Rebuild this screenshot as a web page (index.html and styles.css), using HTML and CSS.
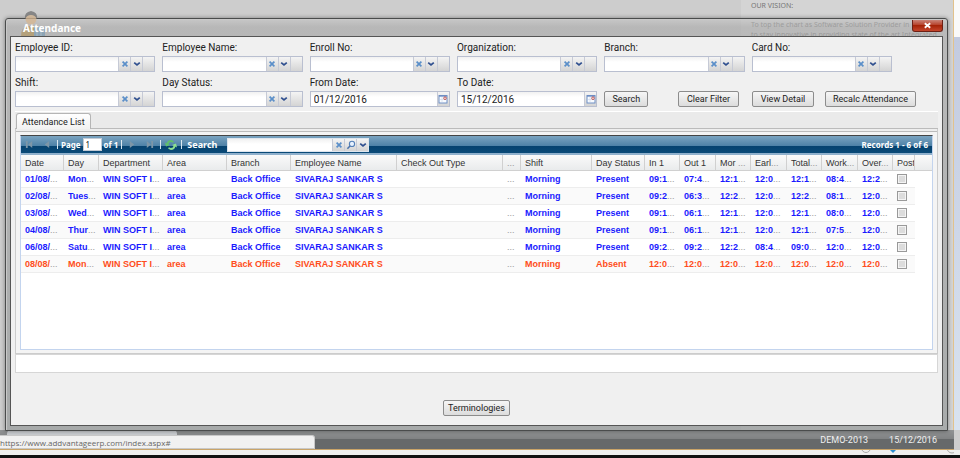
FILE: index.html
```html
<!DOCTYPE html>
<html lang="en">
<head>
    <meta charset="UTF-8">
    <meta name="viewport" content="width=device-width, initial-scale=1.0">
    <title>Attendance</title>
    <link rel="stylesheet" href="styles.css">
</head>
<body>
    <svg class="sprite" aria-hidden="true">
        <symbol id="i-clear" viewBox="0 0 10 10"><path d="M2.6 2.6l4.8 4.8M7.4 2.6L2.6 7.4" stroke="#5b8fc9" stroke-width="1.7" fill="none"/></symbol>
        <symbol id="i-down" viewBox="0 0 10 10"><path d="M2.2 3.6L5 6l2.8-2.4" stroke="#2f4f8f" stroke-width="1.7" fill="none"/></symbol>
        <symbol id="i-find" viewBox="0 0 10 10"><circle cx="6" cy="3.9" r="2.6" stroke="#5580b8" stroke-width="1.1" fill="#e8f2ff"/><path d="M4 6L1.4 8.8" stroke="#4a72ab" stroke-width="1.5"/></symbol>
        <symbol id="i-date" viewBox="0 0 10 10"><rect x="1" y="1.5" width="8" height="7.5" fill="#f8fbff" stroke="#6f8fc4"/><path d="M1 2h8" stroke="#6f8fc4" stroke-width="1.4"/><path d="M2 5.5h6M4 3v5.5" stroke="#c9d6ea" stroke-width=".6"/><circle cx="7" cy="4.2" r="1.3" fill="#fff" stroke="#b8433f" stroke-width=".9"/></symbol>
    </svg>

    <div class="desktop">
        <div class="portal">
            <p>OUR VISION:</p>
            <p>To top the chart as Software Solution Provider in<br>to stay innovative in providing state of the art Integrated</p>
        </div>
        <aside class="edge"></aside>
    </div>

    <div class="statusbar">
        <div class="open-tab"></div>
        <span>DEMO-2013</span>
        <span>15/12/2016</span>
    </div>
    <div class="strip">
        <svg width="100" height="6" viewBox="0 0 100 6">
            <circle cx="12" cy="-2" r="4.5" fill="none" stroke="#aaa"/>
            <path d="M36 0h6l-3 3z" fill="#2d8fd0"/>
            <circle cx="98" cy="-2" r="5" fill="none" stroke="#aaa"/>
        </svg>
    </div>
    <div class="taskbar"></div>

    <section class="window">
        <header class="titlebar">
            <svg class="person" viewBox="0 0 27 26">
                <path d="M1 26q0-9 7-10h6q6 1 6 10z" fill="#b39a68"/>
                <path d="M14 17h11v9H14z" fill="#7f9fb6"/>
                <path d="M17 17v9M21 17v9" stroke="#a9bdca"/>
                <circle cx="11" cy="9" r="5.5" fill="#d6b690"/>
                <path d="M5 9Q4 2 11 1q7 1 6 8-2-4-6-4T5 9z" fill="#6f6f6f"/>
            </svg>
            <h1>Attendance</h1>
            <button class="close" aria-label="Close">
                <svg viewBox="0 0 10 10"><path d="M2 2.5l6 5M8 2.5l-6 5" stroke="#fff" stroke-width="2"/></svg>
            </button>
        </header>

        <div class="content">
            <form class="filters">
                <div class="field">
                    <label for="empId">Employee ID:</label>
                    <div class="combo"><input type="text" id="empId"><button type="button" aria-label="Clear"><svg><use href="#i-clear"/></svg></button><button type="button" aria-label="Open"><svg><use href="#i-down"/></svg></button><button type="button" aria-label="More"></button></div>
                </div>
                <div class="field">
                    <label for="empName">Employee Name:</label>
                    <div class="combo"><input type="text" id="empName"><button type="button" aria-label="Clear"><svg><use href="#i-clear"/></svg></button><button type="button" aria-label="Open"><svg><use href="#i-down"/></svg></button><button type="button" aria-label="More"></button></div>
                </div>
                <div class="field">
                    <label for="enroll">Enroll No:</label>
                    <div class="combo"><input type="text" id="enroll"><button type="button" aria-label="Clear"><svg><use href="#i-clear"/></svg></button><button type="button" aria-label="Open"><svg><use href="#i-down"/></svg></button><button type="button" aria-label="More"></button></div>
                </div>
                <div class="field">
                    <label for="org">Organization:</label>
                    <div class="combo"><input type="text" id="org"><button type="button" aria-label="Clear"><svg><use href="#i-clear"/></svg></button><button type="button" aria-label="Open"><svg><use href="#i-down"/></svg></button><button type="button" aria-label="More"></button></div>
                </div>
                <div class="field">
                    <label for="branch">Branch:</label>
                    <div class="combo"><input type="text" id="branch"><button type="button" aria-label="Clear"><svg><use href="#i-clear"/></svg></button><button type="button" aria-label="Open"><svg><use href="#i-down"/></svg></button><button type="button" aria-label="More"></button></div>
                </div>
                <div class="field">
                    <label for="card">Card No:</label>
                    <div class="combo"><input type="text" id="card"><button type="button" aria-label="Clear"><svg><use href="#i-clear"/></svg></button><button type="button" aria-label="Open"><svg><use href="#i-down"/></svg></button><button type="button" aria-label="More"></button></div>
                </div>
                <div class="field">
                    <label for="shift">Shift:</label>
                    <div class="combo"><input type="text" id="shift"><button type="button" aria-label="Clear"><svg><use href="#i-clear"/></svg></button><button type="button" aria-label="Open"><svg><use href="#i-down"/></svg></button><button type="button" aria-label="More"></button></div>
                </div>
                <div class="field">
                    <label for="dayStatus">Day Status:</label>
                    <div class="combo"><input type="text" id="dayStatus"><button type="button" aria-label="Clear"><svg><use href="#i-clear"/></svg></button><button type="button" aria-label="Open"><svg><use href="#i-down"/></svg></button><button type="button" aria-label="More"></button></div>
                </div>
                <div class="field">
                    <label for="fromDate">From Date:</label>
                    <div class="combo"><input type="text" id="fromDate" value="01/12/2016"><button type="button" aria-label="Pick date"><svg><use href="#i-date"/></svg></button></div>
                </div>
                <div class="field">
                    <label for="toDate">To Date:</label>
                    <div class="combo"><input type="text" id="toDate" value="15/12/2016"><button type="button" aria-label="Pick date"><svg><use href="#i-date"/></svg></button></div>
                </div>
                <div class="actions">
                    <button type="button" class="btn search-btn">Search</button>
                    <button type="button" class="btn clear-btn">Clear Filter</button>
                    <button type="button" class="btn view-btn">View Detail</button>
                    <button type="button" class="btn recalc-btn">Recalc Attendance</button>
                </div>
            </form>

            <div class="tabs">
                <button type="button" class="tab">Attendance List</button>
            </div>

            <div class="tab-body">
                <div class="grid">
                    <div class="toolbar">
                        <button type="button" class="nav" aria-label="First page"><svg viewBox="0 0 10 10"><path d="M1 1h2v8H1zM8 1v8L3.5 5z"/></svg></button>
                        <button type="button" class="nav" aria-label="Previous page"><svg viewBox="0 0 10 10"><path d="M8 1v8L3 5z"/></svg></button>
                        <span class="sep"></span>
                        <label for="page">Page</label>
                        <input type="text" id="page" class="page" value="1">
                        <span>of 1</span>
                        <span class="sep"></span>
                        <button type="button" class="nav" aria-label="Next page"><svg viewBox="0 0 10 10"><path d="M2 1v8l5-4z"/></svg></button>
                        <button type="button" class="nav" aria-label="Last page"><svg viewBox="0 0 10 10"><path d="M2 1v8l4.5-4zM7 1h2v8H7z"/></svg></button>
                        <span class="sep"></span>
                        <button type="button" class="reload" aria-label="Refresh"><svg viewBox="0 0 12 12"><path d="M2.5 5Q3 2 6 2l2.5 1" fill="none" stroke="#5fbf6c" stroke-width="1.8"/><path d="M0 3.5l5 2.5-4 1.5z" fill="#5fbf6c"/><path d="M9.5 7Q9 10 6 10L3.5 9" fill="none" stroke="#8fe08f" stroke-width="1.8"/><path d="M12 8.5L7 6l4-1.5z" fill="#8fe08f"/></svg></button>
                        <span class="sep"></span>
                        <label for="gridSearch" class="search-label">Search</label>
                        <div class="combo grid-search"><input type="text" id="gridSearch"><button type="button" aria-label="Clear"><svg><use href="#i-clear"/></svg></button><button type="button" aria-label="Find"><svg><use href="#i-find"/></svg></button><button type="button" aria-label="Open"><svg><use href="#i-down"/></svg></button></div>
                        <span class="records">Records 1 - 6 of 6</span>
                    </div>
                    <table>
                        <colgroup>
                            <col class="c-date"><col class="c-time"><col class="c-mid"><col class="c-mid"><col class="c-mid"><col class="c-wide"><col class="c-wide"><col class="c-dots"><col class="c-shift"><col class="c-status"><col class="c-time"><col class="c-calc"><col class="c-time"><col class="c-calc"><col class="c-time"><col class="c-calc"><col class="c-time"><col class="c-post"><col>
                        </colgroup>
                        <thead>
                            <tr><th>Date</th><th>Day</th><th>Department</th><th>Area</th><th>Branch</th><th>Employee Name</th><th>Check Out Type</th><th><i>...</i></th><th>Shift</th><th>Day Status</th><th>In 1</th><th>Out 1</th><th>Mor <i>...</i></th><th>Earl<i>...</i></th><th>Total<i>...</i></th><th>Work<i>...</i></th><th>Over<i>...</i></th><th>Post</th><th></th></tr>
                        </thead>
                        <tbody>
                            <tr><td>01/08/<i>...</i></td><td>Mon<i>...</i></td><td>WIN SOFT I<i>...</i></td><td>area</td><td>Back Office</td><td>SIVARAJ SANKAR S</td><td></td><td><i>...</i></td><td>Morning</td><td>Present</td><td>09:1<i>...</i></td><td>07:4<i>...</i></td><td>12:1<i>...</i></td><td>12:0<i>...</i></td><td>12:1<i>...</i></td><td>08:4<i>...</i></td><td>12:2<i>...</i></td><td><input type="checkbox" aria-label="Post 01/08"></td></tr>
                            <tr><td>02/08/<i>...</i></td><td>Tues<i>...</i></td><td>WIN SOFT I<i>...</i></td><td>area</td><td>Back Office</td><td>SIVARAJ SANKAR S</td><td></td><td><i>...</i></td><td>Morning</td><td>Present</td><td>09:2<i>...</i></td><td>06:3<i>...</i></td><td>12:2<i>...</i></td><td>12:0<i>...</i></td><td>12:2<i>...</i></td><td>08:1<i>...</i></td><td>12:0<i>...</i></td><td><input type="checkbox" aria-label="Post 02/08"></td></tr>
                            <tr><td>03/08/<i>...</i></td><td>Wed<i>...</i></td><td>WIN SOFT I<i>...</i></td><td>area</td><td>Back Office</td><td>SIVARAJ SANKAR S</td><td></td><td><i>...</i></td><td>Morning</td><td>Present</td><td>09:1<i>...</i></td><td>06:1<i>...</i></td><td>12:1<i>...</i></td><td>12:0<i>...</i></td><td>12:1<i>...</i></td><td>08:0<i>...</i></td><td>12:0<i>...</i></td><td><input type="checkbox" aria-label="Post 03/08"></td></tr>
                            <tr><td>04/08/<i>...</i></td><td>Thur<i>...</i></td><td>WIN SOFT I<i>...</i></td><td>area</td><td>Back Office</td><td>SIVARAJ SANKAR S</td><td></td><td><i>...</i></td><td>Morning</td><td>Present</td><td>09:1<i>...</i></td><td>06:1<i>...</i></td><td>12:1<i>...</i></td><td>12:0<i>...</i></td><td>12:1<i>...</i></td><td>07:5<i>...</i></td><td>12:0<i>...</i></td><td><input type="checkbox" aria-label="Post 04/08"></td></tr>
                            <tr><td>06/08/<i>...</i></td><td>Satu<i>...</i></td><td>WIN SOFT I<i>...</i></td><td>area</td><td>Back Office</td><td>SIVARAJ SANKAR S</td><td></td><td><i>...</i></td><td>Morning</td><td>Present</td><td>09:2<i>...</i></td><td>09:2<i>...</i></td><td>12:2<i>...</i></td><td>08:4<i>...</i></td><td>09:0<i>...</i></td><td>12:0<i>...</i></td><td>12:0<i>...</i></td><td><input type="checkbox" aria-label="Post 06/08"></td></tr>
                            <tr class="absent"><td>08/08/<i>...</i></td><td>Mon<i>...</i></td><td>WIN SOFT I<i>...</i></td><td>area</td><td>Back Office</td><td>SIVARAJ SANKAR S</td><td></td><td><i>...</i></td><td>Morning</td><td>Absent</td><td>12:0<i>...</i></td><td>12:0<i>...</i></td><td>12:0<i>...</i></td><td>12:0<i>...</i></td><td>12:0<i>...</i></td><td>12:0<i>...</i></td><td>12:0<i>...</i></td><td><input type="checkbox" aria-label="Post 08/08"></td></tr>
                        </tbody>
                    </table>
                </div>
            </div>
            <div class="summary"></div>
            <div class="bottom">
                <button type="button" class="btn">Terminologies</button>
            </div>
        </div>
    </section>

    <div class="link-hint">https://www.addvantageerp.com/index.aspx#</div>
</body>
</html>
```
FILE: styles.css
```css
* {
    box-sizing: border-box;
}
body {
    margin: 0;
    height: 100vh;
    display: flex;
    flex-direction: column;
    position: relative;
    overflow: hidden;
    background: #cdcdcd;
    font-family: Roboto, Tahoma, sans-serif;
    font-size: 10px;
    color: #222;
}
button, input {
    font: inherit;
    color: inherit;
    margin: 0;
    padding: 0;
}
.sprite {
    position: absolute;
    width: 0;
    height: 0;
}

/* page behind the window */
.desktop {
    flex: 1;
    display: flex;
    justify-content: flex-end;
    min-height: 0;
}
.portal {
    width: 212px;
    padding-left: 10px;
    background: #d4d4d4;
    color: #777;
    font-family: "Noto Sans", sans-serif;
    font-size: 7px;
    line-height: 10px;
    white-space: nowrap;
}
.portal p {
    margin: 1px 0 9px;
}
.edge {
    width: 7px;
    border-left: 1px solid #e2c28c;
    background: linear-gradient(#fafafa 37px, #c3cbe0 37px, #d9e3f0);
}
.statusbar {
    height: 20px;
    margin-right: 6px;
    padding: 0 17px 0 7px;
    display: flex;
    align-items: center;
    gap: 21px;
    border-bottom: 1px solid #c9a468;
    background: linear-gradient(#929495, #808283 9px, #66696a 9px);
    color: #f0f0f0;
    font-size: 9px;
}
.open-tab {
    width: 170px;
    height: 100%;
    margin-right: auto;
    border-radius: 4px;
    background: #c9ccd0;
}
.strip {
    height: 5px;
    display: flex;
    justify-content: flex-end;
    padding-right: 6px;
    background: #f0efee;
}
.taskbar {
    height: 3px;
    background: #111;
}

/* window */
.window {
    position: absolute;
    inset: 18px 12px 27px 5px;
    display: flex;
    flex-direction: column;
    padding: 0 4px 4px;
    border: 1px solid #4a4c4c;
    border-radius: 3px 3px 0 0;
    background: linear-gradient(rgba(195, 195, 195, .6), rgba(172, 172, 172, .65) 8px, rgba(150, 154, 154, .7));
    box-shadow: inset 1px 1px 0 #c9c9c9, 0 0 4px rgba(0, 0, 0, .4);
}
.titlebar {
    height: 17px;
    display: flex;
    align-items: center;
    justify-content: space-between;
    position: relative;
}
.titlebar h1 {
    margin: 0 0 0 13px;
    font-family: "Noto Sans", Tahoma, sans-serif;
    font-size: 10px;
    line-height: 16px;
    color: #fff;
    position: relative;
}
.person {
    position: absolute;
    left: 10px;
    bottom: 0;
    width: 27px;
    height: 26px;
    opacity: .75;
}
.close {
    align-self: flex-start;
    width: 31px;
    height: 12px;
    margin-top: 1px;
    border: 1px solid #6d2015;
    border-top: 0;
    border-radius: 0 0 3px 3px;
    background: linear-gradient(#c98478, #b53a22 50%, #a52408 50%, #c4452c);
    display: flex;
    align-items: center;
    justify-content: center;
}
.close svg {
    width: 9px;
    height: 9px;
}
.content {
    flex: 1;
    display: flex;
    flex-direction: column;
    min-height: 0;
    padding: 3px 4px 9px;
    border: 1px solid #555;
    background: #f0f0f0;
}

/* filters */
.filters {
    display: grid;
    grid-template-columns: repeat(6, minmax(0, 1fr));
    column-gap: 7px;
    row-gap: 3px;
    padding-right: 46px;
}
.field {
    display: flex;
    flex-direction: column;
}
.field label {
    line-height: 16px;
}
.combo {
    display: flex;
    height: 16px;
    border: 1px solid #b9bfd0;
    background: #fff;
}
.combo input {
    flex: 1;
    min-width: 0;
    padding-left: 3px;
    border: 0;
    background: linear-gradient(#f1f1f1, #fff 5px);
}
.combo button {
    width: 12px;
    border: 0;
    border-left: 1px solid #c6cad6;
    background: linear-gradient(#f4f4f4, #d4d4d4);
    display: flex;
    align-items: center;
    justify-content: center;
}
.combo svg {
    width: 10px;
    height: 10px;
    flex: none;
}
.actions {
    grid-column: 5 / 7;
    display: flex;
    align-items: flex-end;
    margin-right: -24px;
}
.btn {
    height: 16px;
    padding: 0 4px;
    border: 1px solid #8c8c8c;
    border-radius: 2px;
    background: linear-gradient(#f6f6f6, #dcdcdc);
    font-size: 9px;
    line-height: 12px;
    white-space: nowrap;
}
.actions .btn {
    padding: 0;
}
.search-btn {
    width: 44px;
    margin-right: auto;
}
.clear-btn {
    width: 61px;
    margin-right: 13px;
}
.view-btn {
    width: 62px;
    margin-right: 11px;
}
.recalc-btn {
    width: 91px;
}

/* tab panel */
.tabs {
    margin-top: 4px;
    padding: 1px 1px 0;
    border-top: 1px solid #fff;
    border-bottom: 1px solid #bbb;
    background: #eaeaea;
    display: flex;
}
.tab {
    height: 16px;
    margin-bottom: -1px;
    padding: 0 5px;
    border: 1px solid #b5b5b5;
    border-bottom: 0;
    border-radius: 3px 3px 0 0;
    background: linear-gradient(#fff, #f2f2f2);
    font-size: 9px;
}
.tab-body {
    padding: 6px 4px 3px;
    border: 1px solid #ccc;
    border-width: 0 1px 1px;
    background: linear-gradient(#eee 2px, #bbb 2px, #bbb 3px, #f4f4f4 3px);
    flex: 1;
    display: flex;
    min-height: 0;
}
.grid {
    flex: 1;
    min-width: 0;
    border: 1px solid #c3d4ee;
    border-top-color: #444;
    background: #fff;
    overflow: hidden;
}
.toolbar {
    height: 19px;
    display: flex;
    align-items: center;
    gap: 2px;
    padding: 0 4px 0 1px;
    border-bottom: 2px solid #8fb0cc;
    background: linear-gradient(#7ba4c1, #4c80a6 60%, #05426f 60%, #0a4a78);
    color: #fff;
    font-family: "Noto Sans", Tahoma, sans-serif;
    font-size: 8px;
    font-weight: bold;
}
.toolbar .nav {
    width: 15px;
    height: 10px;
    border: 0;
    background: none;
}
.nav svg {
    display: block;
    width: 9px;
    height: 9px;
    margin: auto;
    fill: #7d96a8;
}
.sep {
    width: 1px;
    height: 9px;
    margin: 0 1px;
    background: #dce8f0;
}
.page {
    width: 19px;
    height: 13px;
    padding-left: 2px;
    border: 1px solid #c3cbd5;
    background: #fff;
    color: #222;
    font-weight: normal;
}
.reload {
    width: 14px;
    height: 12px;
    border: 0;
    background: none;
}
.reload svg {
    display: block;
    width: 12px;
    height: 12px;
    margin: auto;
}
.search-label {
    padding: 0 8px 0 2px;
    font-size: 9px;
}
.grid-search {
    width: 142px;
    height: 14px;
    border-color: #dfe6ee;
}
.records {
    margin-left: auto;
}

table {
    width: 100%;
    table-layout: fixed;
    border-collapse: separate;
    border-spacing: 0;
    font-family: "Liberation Sans", Arial, sans-serif;
    font-size: 9px;
}
.c-date { width: 43px; }
.c-time { width: 35px; }
.c-calc { width: 36px; }
.c-mid { width: 64px; }
.c-wide { width: 106px; }
.c-dots { width: 18px; }
.c-shift { width: 71px; }
.c-status { width: 53px; }
.c-post { width: 22px; }
th, td {
    height: 17px;
    padding: 0 0 0 4px;
    text-align: left;
    white-space: nowrap;
    overflow: hidden;
    line-height: 14px;
}
th {
    height: 16px;
    border-right: 1px solid #d0d0d0;
    border-bottom: 1px solid #d0d0d0;
    background: linear-gradient(#fafafa, #e9ebec);
    font-weight: normal;
    color: #333;
}
th:last-child {
    border-right: 0;
}
td {
    border-bottom: 1px solid #ededed;
    font-weight: bold;
    color: #1a1aff;
}
tbody tr:nth-child(even) td {
    background: #fafafa;
}
.absent td {
    color: #ff4d20;
}
th i, td i {
    font-style: normal;
    font-weight: normal;
    color: #999;
}
td input {
    appearance: none;
    display: block;
    width: 10px;
    height: 10px;
    border: 1px solid #999;
    background: #dcdcdc;
    box-shadow: inset 0 0 0 1px #f4f4f4;
}

.summary {
    height: 19px;
    border: 1px solid #d6d6d6;
    background: #fff;
}
.bottom {
    padding: 27px 0 0;
    display: flex;
    justify-content: center;
}

/* browser link hint over the page */
.link-hint {
    position: absolute;
    left: 0;
    bottom: 9px;
    width: 315px;
    height: 14px;
    border: 1px solid #c8c8c8;
    border-left: 0;
    border-radius: 0 3px 0 0;
    background: #f1f1f1;
    color: #666;
    font-family: "Open Sans", sans-serif;
    font-size: 8px;
    line-height: 13px;
}
```
